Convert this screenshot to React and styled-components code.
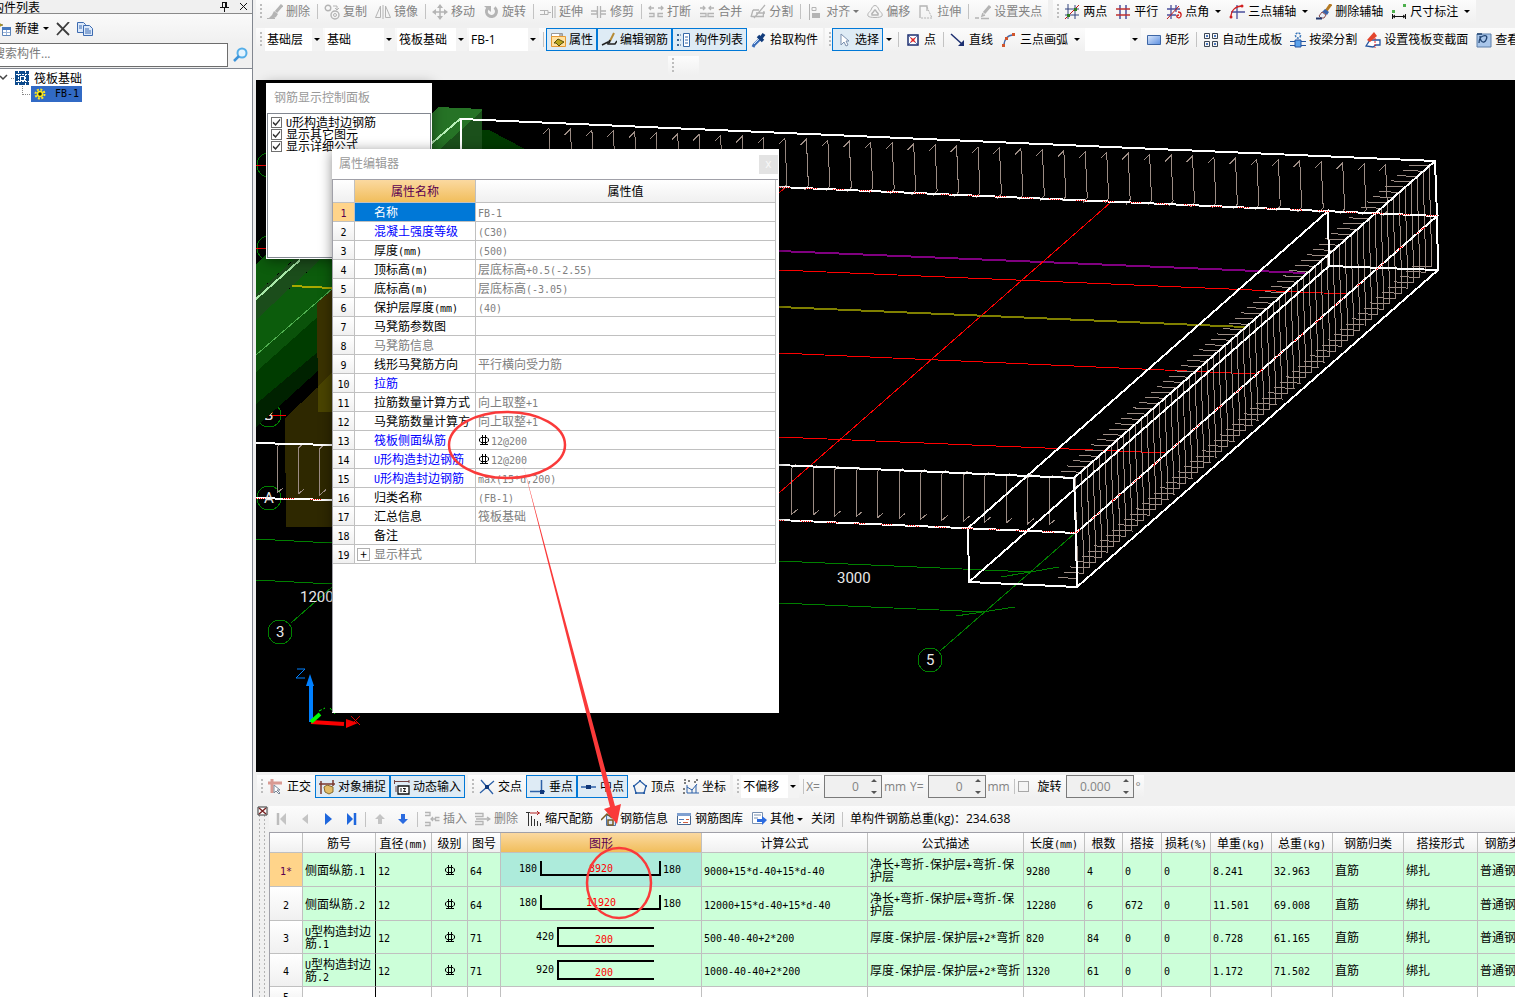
import React from 'react';
import styled, { createGlobalStyle, css } from 'styled-components';

const UI_FONT = '"Open Sans", "Noto Sans CJK SC", sans-serif';
const SONG_FONT = '"Noto Sans CJK SC", sans-serif';

const GlobalStyle = createGlobalStyle`
  * { box-sizing: border-box; }
  body {
    margin: 0;
    overflow: hidden;
    background: #f0f0f0;
    color: #000;
    font: 12px/16px ${UI_FONT};
  }
  button, input, select { font: inherit; color: inherit; }
`;

/* ---------- icons ---------- */

const G = '#b4b4b4';

const icons = {
  brush: <><path d="M15 1L9 8" stroke={G} strokeWidth="3" /><path d="M7 7l4 3-2 3-4 2H1l4-4z" fill={G} /><path d="M0 14.5h8" stroke={G} /></>,
  copy: <><circle cx="4" cy="4" r="2.8" stroke={G} strokeWidth="1.4" /><circle cx="11" cy="11" r="4" stroke={G} strokeWidth="1.4" /><circle cx="11" cy="11" r="1.5" stroke={G} /><path d="M9 2h4v4M11 4l2 2 2-2" stroke={G} /></>,
  mirror: <path d="M5.500 2L.500 13.500h5zM10.500 2l5 11.500h-5zM8 1v14" stroke={G} />,
  move: <><path d="M8 2v12M2 8h12" stroke={G} strokeWidth="1.500" /><path d="M8 0l3 4H5zM8 16l3-4H5zM0 8l4-3v6zM16 8l-4-3v6z" fill={G} /></>,
  rotate: <><path d="M4.500 4.500a5 5 0 1 0 7-1" stroke={G} strokeWidth="3" /><path d="M1 2h7v6z" fill={G} /></>,
  extend: <path d="M0 6.500h8v4H0M4.500 6v4M8 8.500h3M12.500 2v12M15 2v12" stroke={G} />,
  trim: <path d="M0 7h6v3H0M9 7h6M9 10h6M6.500 2v12M9.500 2v12" stroke={G} strokeWidth="1.300" />,
  breaks: <path d="M1 4h5M10 4h5M3 2L1 4l2 2M13 2l2 2-2 2M1 12.500h5v-3H1M15 12.500h-5v-3h5" stroke={G} strokeWidth="1.300" />,
  join: <path d="M1 4h5M10 4h5M4 2l2 2-2 2M12 2l-2 2 2 2M1 9.500h6v3H1M15 9.500H9v3h6" stroke={G} strokeWidth="1.300" />,
  split: <path d="M3 6h6M1 12.500h13M3 6L1 13M14 7l-1 6M15 1L4 14M6 9h9" stroke={G} strokeWidth="1.300" />,
  align: <><path d="M2.500 0v16M5 3.500h4v3H5z" stroke={G} /><path d="M5 9h8v5H5z" fill={G} /></>,
  offset: <><path d="M1 12c-1-3 2-4 3-6 2-6 6-6 8 0 1 2 4 3 3 6-1 2-13 2-14 0z" stroke={G} /><path d="M5 11c-1-2 1-2 2-4q1-2 2 0c1 2 3 2 2 4z" stroke={G} strokeWidth="1.500" /></>,
  stretch: <><path d="M2 14V2h7v5" stroke={G} strokeWidth="1.300" /><path d="M9 3l5 11H3" stroke={G} strokeDasharray="2 1" /></>,
  gripset: <><path d="M15 2L9 9" stroke={G} strokeWidth="3" /><path d="M8 9l-1 3 3-1M0 14h4M6 14.500h8" stroke={G} strokeWidth="1.500" /></>,
  twoPoint: <><path d="M4 0v15M11 1v14M1 5h14M1 11h14" stroke="#33447e" /><path d="M1 15L15 1" stroke="#c01818" /><path d="M3 10h3v3H3zM10 4h3v3h-3z" fill="#2f7d20" /></>,
  parallel: <><path d="M5 1v14M11 1v14" stroke="#4a4f9c" strokeWidth="1.500" /><path d="M1 5h14M1 11h14" stroke="#c03030" strokeWidth="1.500" /></>,
  pointAngle: <><path d="M5 1v14M1 5h13M1 11h9M10 1v7" stroke="#4a4f9c" strokeWidth="1.300" /><path d="M1 15L13 2" stroke="#c01818" /><path d="M12 8c4 0 4 5 1 6-3-1-3-3 0-3" stroke="#d02020" strokeWidth="1.300" /></>,
  threeAxis: <><path d="M8 1v14M2 8h14" stroke="#4a4f9c" strokeWidth="1.300" /><path d="M2 13C2 6 7 2 13 2" stroke="#d02020" strokeWidth="1.300" /><circle cx="2" cy="13" r="1.500" fill="#d02020" /><circle cx="13" cy="2" r="1.500" fill="#d02020" /></>,
  delAxis: <><path d="M15 0l-5 7" stroke="#b57b26" strokeWidth="3" /><path d="M9 5l4 3-2 3-5-3z" fill="#3a62a8" /><path d="M6 8l4 3-2 3H5l-2-2z" fill="#e8eef8" stroke="#8a4c4c" /><path d="M0 14.500h6" stroke="#22376a" strokeWidth="2" /></>,
  dimension: <><path d="M1.500 10v5M14.500 10v5M1 12.500h14M4 11l-2 1.500L4 14M12 11l2 1.500-2 1.500" stroke="#111" /><path d="M1 6h3v3H1zM12 0h3v3h-3z" fill="#4db04d" /></>,
  props: <><path d="M1.500 1.500h11v4h-11z" fill="#fff" stroke="#9a9a9a" /><path d="M9 3h3" stroke="#666" /><path d="M1.500 4.500h14v10h-14z" fill="#ffe1a0" stroke="#e59a35" /><path d="M4 11l4-4 6 3-3 2-2 2-3-3z" fill="#b9a51c" stroke="#57510a" /></>,
  editBar: <><path d="M13 1L9 9" stroke="#b58a35" strokeWidth="2" /><path d="M9 8l-1 3" stroke="#222" strokeWidth="2" /><path d="M1 13l6-3v2h7l2-3" stroke="#222" strokeWidth="1.500" /></>,
  list: <><path d="M1 2h2v2H1zM1 7h2v2H1zM1 12h2v2H1z" fill="#3e6591" /><path d="M4 3h2M4 8h2M4 13h2" stroke="#3e6591" strokeDasharray="1 1" /><path d="M7.500 1.500h6v13h-6z" fill="#fff" stroke="#3569a8" /><path d="M9 5h3M9 8h3M9 11h3" stroke="#3569a8" /></>,
  dropper: <><path d="M9 7l-6 6-1 2" stroke="#3b6db8" strokeWidth="3" /><path d="M8 7l-5 5" stroke="#cfe6ff" /><path d="M7 4l5 5M10 6l3-4" stroke="#123c7c" strokeWidth="3.500" /></>,
  cursor: <path d="M5 2v11l3-3 2 4 2-1-2-4h3z" fill="#fff" stroke="#7b8fae" />,
  point: <><path d="M3 3h10v10H3z" fill="#fff" stroke="#1c2f70" strokeWidth="1.500" /><path d="M4 4l8 8M12 4l-8 8" stroke="#6b7cb8" /><path d="M6 6l4 4M10 6l-4 4" stroke="#e02828" strokeWidth="1.500" /></>,
  line: <><path d="M1 2l11 10" stroke="#1c2f70" strokeWidth="1.500" /><path d="M14 8v6H8z" fill="#1c2f70" /></>,
  arc: <><path d="M3 14C3 7 7 3 12 3" stroke="#4a6ba8" strokeWidth="1.500" /><path d="M1 12h3v3H1zM4 5h3v3H4zM11 1h3v3h-3z" fill="#d2552c" /></>,
  rect: <path d="M1.500 3.500h13v9h-13z" fill="url(#rectFill)" stroke="#3d66a5" />,
  autoSlab: <><path d="M1.500 1.500h5v5h-5zM9.500 1.500h5v5h-5zM1.500 9.500h5v5h-5zM9.500 9.500h5v5h-5z" stroke="#3b4654" /><path d="M3 3h2v2H3zM11 3h2v2h-2zM3 11h2v2H3zM11 11h2v2h-2z" fill="#4a78c0" /></>,
  beam: <><circle cx="8" cy="3.500" r="2.500" stroke="#3975b8" strokeWidth="1.500" strokeDasharray="2 1" /><path d="M0 9.500h16M0 13.500h16" stroke="#2455a0" /><path d="M5 8h6v7H5z" fill="#5ba2ec" stroke="#2455a0" /></>,
  raft: <><path d="M1 14l4-6h10v5h-4l-3 2z" fill="#fff" stroke="#2455a0" strokeWidth="1.300" /><path d="M2 8l7-8 3 4-7 6z" fill="#e3452d" /><path d="M10 6v10" stroke="#e02020" strokeDasharray="2 1" /></>,
  view: <><path d="M1 2h14v13H1z" fill="#a9c6ea" stroke="#5d7ea9" /><path d="M1 2h5M4 4c0 6 4 8 6 4s0-5-3-4-4 3-4 7" stroke="#1f416e" strokeWidth="1.300" /></>,
  ortho: <><path d="M0 4h14M4 0v14" stroke="#d99a92" strokeWidth="3" /><path d="M6 6v8l2-2 3 3 1-1-3-3h3z" fill="#fff" stroke="#7a8899" /></>,
  snap: <><path d="M2 2v13M0 5h16M14 1v6" stroke="#7b3a30" strokeWidth="1.500" /><path d="M5 8l3-2 6 2v5l-4 2-4-2z" fill="#e2bd68" stroke="#876a2c" /></>,
  dynInput: <><path d="M.500 5V1M1 2.500h14M15 1v3M2 7v6" stroke="#714141" /><path d="M4 7h11v8H4z" fill="#fff" stroke="#111" strokeWidth="1.300" /><path d="M7 9v4M9 9.500h2.500L9.500 12.500H12" stroke="#111" /></>,
  cross: <><path d="M2 1l12 14M15 2L1 14" stroke="#2d61a8" strokeWidth="1.300" /><path d="M6 6h4v4H6z" fill="#10387a" /></>,
  perp: <><path d="M0 12.500h15M11.500 1v12" stroke="#2d61a8" strokeWidth="1.500" /><path d="M10 11h4v4h-4z" fill="#10387a" /></>,
  mid: <><path d="M0 8h15" stroke="#2d61a8" strokeWidth="1.500" /><path d="M5 6h5v4H5z" fill="#10387a" /></>,
  vertex: <><path d="M8 2l6 5-2 7H4L2 7z" stroke="#2d61a8" strokeWidth="1.300" /><path d="M7 1h2v2H7zM13 6h2v2h-2zM1 6h2v2H1zM3 13h2v2H3zM11 13h2v2h-2z" fill="#2d61a8" /></>,
  coord: <><path d="M4 6v8h12M4 8l5 3 5-6M9 10v4M13 6v8" stroke="#2d61a8" /><path d="M1 1h2M5 2h2M1 4h2M13 1h2M11 3h2M1 9v2M1 13v2" stroke="#555" strokeWidth="1.500" /></>,
  first: <><path d="M4 2v12" stroke="#bcbcbc" strokeWidth="2.500" /><path d="M12 2v12L6 8z" fill="#c4c4c4" /></>,
  prev: <path d="M11 3v10L5 8z" fill="#c4c4c4" />,
  next: <path d="M5 2l7 6-7 6z" fill="#1f67dd" />,
  last: <><path d="M4 2l6 6-6 6z" fill="#1f67dd" /><path d="M12 2v12" stroke="#1f67dd" strokeWidth="2.500" /></>,
  up: <path d="M8 3l5 5h-3v5H6V8H3z" fill="#c4c4c4" />,
  down: <path d="M8 13l5-5h-3V3H6v5H3z" fill="#2b6be0" />,
  insert: <path d="M1 1.500h5v3H1M1 11.500h5v3H1M7 8h4M9 6L7 8l2 2M15.500 6.500h-4v3h4" stroke={G} strokeWidth="1.300" />,
  remove: <path d="M0 2.500h8v3H0M0 10.500h8v3H0M1 8h14M12 6l3 2-3 2" stroke={G} strokeWidth="1.300" />,
  scale: <><path d="M2.500 1v14M5.500 5v10M8.500 8v7M11.500 10v5M14.500 12v3M0 1.500h4" stroke="#333" /><path d="M4 2h10M11 0l2 2-2 2" stroke="#b02020" /></>,
  info: <><path d="M5.500 4.500h9v10h-9z" fill="#d7e4f5" stroke="#4d74ad" /><path d="M0 9l6-6 5 4M7 9h5v5H7z" stroke="#7a5a20" strokeWidth="1.500" /></>,
  library: <><path d="M1.500 2.500h13v11h-13z" fill="#fff" stroke="#44658f" /><path d="M1 2h14v3H1z" fill="#7fa0d0" /><path d="M3 8.500h5M3 11.500h2" stroke="#4f7ab8" /><path d="M10 8.500h3M7 11.500h5" stroke="#d06040" /></>,
  other: <><path d="M1.500 1.500h10v11h-10z" fill="#fff" stroke="#7890b0" /><path d="M3 4h7M3 7h4" stroke="#7890b0" /><path d="M6 8h5V5l5 4-5 5v-3H6z" fill="#2b6be0" /></>,
};

const IconSvg = styled.svg`
  flex: none;
  display: block;
  fill: none;
`;

const Icon = ({ name }) => (
  <IconSvg width="16" height="16" viewBox="0 0 16 16" aria-hidden="true">
    {name === 'rect' && (
      <defs>
        <linearGradient id="rectFill" x2="1" y2="1">
          <stop stopColor="#dbe8fb" />
          <stop offset="1" stopColor="#5c8fe0" />
        </linearGradient>
      </defs>
    )}
    {icons[name]}
  </IconSvg>
);

const Caret = ({ color = '#000' }) => (
  <IconSvg width="6" height="3" viewBox="0 0 6 3" aria-hidden="true">
    <path d="M0 0h6L3 3z" fill={color} />
  </IconSvg>
);

const RebarSign = () => (
  <IconSvg width="10" height="10" viewBox="0 0 10 10" aria-hidden="true">
    <path d="M3.500 0v9M6.500 0v9M1 9.500h8M2 2.500h6L9.500 4v2L8 7.500H2L.500 6V4z" stroke="#000" />
  </IconSvg>
);

/* Latin runs are set in a half-width mono face so two letters span one ideograph */
const Half = styled.span`
  font: 10px/0 "DejaVu Sans Mono", monospace;
`;

const Song = ({ children }) =>
  String(children).split(/([\x20-\x7e]+)/).map((part, i) => (i % 2 ? <Half key={i}>{part}</Half> : part));

/* ---------- toolbar parts ---------- */

const Row = styled.div`
  display: flex;
  height: ${p => p.$height || 23}px;
  white-space: nowrap;
`;

const Band = styled.div`
  display: flex;
  flex: none;
  align-items: center;
  margin-left: ${p => p.$gap || 0}px;
  padding-right: ${p => p.$end || 0}px;
  background: linear-gradient(#fcfcfc, #f0f0f0);
`;

const Grip = styled.span`
  flex: none;
  width: 2px;
  height: 15px;
  margin: 0 1px 0 4px;
  background: repeating-linear-gradient(#bdbdbd 0 2px, transparent 2px 4px);
`;

const Sep = styled.span`
  flex: none;
  width: 1px;
  height: 15px;
  margin: 0 2px 0 3px;
  background: #c3c3c3;
`;

const ToolButton = styled.button`
  display: flex;
  flex: none;
  align-items: center;
  gap: 3px;
  height: 23px;
  padding: 0 3px;
  border: 1px solid ${p => (p.$on ? '#0078d7' : 'transparent')};
  background: ${p => (p.$on ? '#deebf5' : 'transparent')};
  white-space: nowrap;
  color: ${p => (p.disabled ? '#838383' : '#000')};

  ${p => p.$iconOnly && css`
    justify-content: center;
    width: 23px;
  `}
`;

const CaretSlot = styled.span`
  display: flex;
  justify-content: flex-end;
  width: ${p => (p.$tight ? 6 : 9)}px;
`;

const Tool = ({ icon, label, caret, tight, on, disabled }) => (
  <ToolButton $on={on} disabled={disabled}>
    {icon && <Icon name={icon} />}
    {label}
    {caret && <CaretSlot $tight={tight}><Caret color={disabled ? '#777' : '#000'} /></CaretSlot>}
  </ToolButton>
);

const SplitCaret = styled.button`
  display: flex;
  align-items: center;
  width: 12px;
  height: 23px;
  padding: 0 3px;
  border: 0;
  background: none;
`;

const ComboGroup = styled.div`
  display: flex;
  gap: 2px;
  padding: 0 1px 0 ${p => p.$lead}px;
`;

const ComboBox = styled.label`
  display: grid;
  width: ${p => p.$width}px;
  height: 23px;
  align-items: center;
  background: linear-gradient(to right, #fff calc(100% - 11px), #f3f3f3 0);

  > * { grid-area: 1 / 1; }
  > svg { justify-self: end; margin-right: 3px; pointer-events: none; }

  select {
    width: 100%;
    height: 21px;
    padding: 0 2px;
    border: 0;
    appearance: none;
    background: transparent;
  }
`;

const Combo = ({ name, value, width }) => (
  <ComboBox $width={width}>
    <select aria-label={name} defaultValue={value}><option>{value}</option></select>
    <Caret />
  </ComboBox>
);

/* ---------- component list ---------- */

const Sidebar = styled.aside`
  flex: 0 0 253px;
  display: flex;
  flex-direction: column;
  border-right: 1px solid #828790;
  margin-right: 3px;
  overflow: hidden;
  background: #f0f0f0;
`;

const SideTitle = styled.div`
  display: flex;
  align-items: center;
  justify-content: space-between;
  height: 14px;
  padding-right: 4px;
  border-bottom: 1px solid #8a8a8a;
  font-family: ${SONG_FONT};
  line-height: 13px;
`;

const Shifted = styled.div`
  display: flex;
  align-items: center;
  gap: ${p => p.$gap || 0}px;
  margin-left: -${p => p.$by}px;
`;

const PlainButton = styled.button`
  display: flex;
  align-items: center;
  gap: 4px;
  padding: 0;
  border: 0;
  background: none;
`;

const SideTools = styled.div`
  display: flex;
  height: 29px;
  background: linear-gradient(#fafafa, #f0f0f0);
`;

const SearchRow = styled.div`
  display: flex;
  height: 26px;
  border-bottom: 1px solid #828790;
`;

const SearchInput = styled.input`
  flex: 1;
  min-width: 0;
  height: 24px;
  margin-left: -8px;
  padding: 0 0 3px;
  border: 1px solid #6d6d6d;
  outline: none;
  background: #fff;

  &::placeholder { color: #7a7a7a; opacity: 1; }
`;

const SearchButton = styled.button`
  width: 24px;
  height: 24px;
  padding: 4px;
  border: 0;
  background: none;
`;

const Tree = styled.div`
  flex: 1;
  padding-top: 1px;
  background: #fff;
  font-family: ${SONG_FONT};
`;

const TreeNode = styled.div`
  display: flex;
  align-items: center;
  height: 16px;
  gap: 5px;
`;

const LeafRow = styled.div`
  display: flex;
`;

const TreeLeaf = styled.div`
  display: flex;
  align-items: center;
  gap: 9px;
  width: 51px;
  height: 16px;
  padding-left: 3px;
  background: #316ac5;
`;

const ComponentList = () => (
  <Sidebar>
    <SideTitle>
      <Shifted $by={8}>构件列表</Shifted>
      <Shifted $by={0} $gap={10}>
        <PlainButton aria-label="固定">
          <IconSvg width="9" height="11" viewBox="0 0 9 11"><path d="M2.500 1v5M2 1.500h4M5.500 1v5M6.500 1v5M0 6.500h9M4.500 7v4" stroke="#111" /></IconSvg>
        </PlainButton>
        <PlainButton aria-label="关闭">
          <IconSvg width="9" height="9" viewBox="0 0 9 9"><path d="M1 1l7 7M8 1L1 8" stroke="#111" /></IconSvg>
        </PlainButton>
      </Shifted>
    </SideTitle>
    <SideTools>
      <Shifted $by={5} $gap={7}>
        <PlainButton>
          <IconSvg width="16" height="16" viewBox="0 0 16 16">
            <path d="M7.500 6.500h8v8h-8z" fill="#fff" stroke="#5d84b8" /><path d="M7 6h9v3H7z" fill="#4679c0" /><path d="M8 11.500h7M11.500 9v5" stroke="#9ab4d8" />
            <path d="M4 0l1 3 3 1-3 1-1 3-2-3-2-1 3-1z" fill="#d6b400" stroke="#4a4000" strokeWidth=".500" />
          </IconSvg>
          新建<Caret />
        </PlainButton>
        <PlainButton aria-label="删除">
          <IconSvg width="14" height="14" viewBox="0 0 14 14"><path d="M1 1l12 12M13 0L1 13" stroke="#3c3c3c" strokeWidth="1.800" /></IconSvg>
        </PlainButton>
        <PlainButton aria-label="复制">
          <IconSvg width="16" height="14" viewBox="0 0 16 14">
            <path d="M.500 .500h6l2 2v8h-8z" fill="#dbe9fb" stroke="#3d6bb0" /><path d="M6.500 3.500h6l3 3v7h-9z" fill="#dbe9fb" stroke="#3d6bb0" /><path d="M2 4h3M2 6h3M8 7h4M8 9h6M8 11h6" stroke="#3d6bb0" />
          </IconSvg>
        </PlainButton>
      </Shifted>
    </SideTools>
    <SearchRow>
      <SearchInput aria-label="搜索构件" placeholder="搜索构件..." />
      <SearchButton aria-label="搜索">
        <IconSvg width="16" height="16" viewBox="0 0 16 16"><circle cx="10" cy="6" r="4.500" stroke="#55aee8" strokeWidth="2" fill="#e4f4ff" /><path d="M7 9l-5 5" stroke="#3d93d8" strokeWidth="2.500" /></IconSvg>
      </SearchButton>
    </SearchRow>
    <Tree>
      <TreeNode>
        <IconSvg width="29" height="16" viewBox="0 0 29 16">
          <path d="M0 6l3 3 4-4" stroke="#444" strokeWidth="1.500" />
          <path d="M11 8.500h4" stroke="#888" strokeDasharray="1 1" />
          <g shapeRendering="crispEdges">
            <path d="M15 1h14v14H15z" fill="#0c4a8c" />
            <path d="M15.500 4.500h13M15.500 11.500h13M18.500 1v14M25.500 1v14" stroke="#fff" strokeDasharray="2 1" />
            <path d="M20 6h4v4h-4z" fill="#0c4a8c" stroke="#fff" />
          </g>
        </IconSvg>
        筏板基础
      </TreeNode>
      <LeafRow>
        <IconSvg width="31" height="16" viewBox="0 0 31 16">
          <path d="M22.500 0v9M23 8.500h8" stroke="#888" strokeDasharray="1 1" />
        </IconSvg>
        <TreeLeaf>
          <IconSvg width="12" height="12" viewBox="0 0 12 12">
            <circle cx="6" cy="6" r="4.500" stroke="#ffe81c" strokeWidth="2" strokeDasharray="2 1.500" />
            <circle cx="6" cy="6" r="2.500" stroke="#ffe81c" strokeWidth="1.500" fill="#1a2a00" />
          </IconSvg>
          <Song>FB-1</Song>
        </TreeLeaf>
      </LeafRow>
    </Tree>
  </Sidebar>
);

/* ---------- 3D view ---------- */

const SceneSvg = styled.svg`
  display: block;
  width: 100%;
  height: 100%;
  background: #000;
  fill: none;
`;

const range = n => Array.from({ length: n }, (_, i) => i);

const backStirrups = range(40).map(i => {
  const x = 549 + i * 21.450;
  const y = 128 + i * 0.940;
  return `M${x - 6} ${y + 6}L${x} ${y}L${x + 2} ${y + 46}L${x - 2} ${y + 51}`;
}).join('');

const frontStirrups = range(37).map(i => {
  const x = 277 + i * 21.450;
  const y = 447 + i * 0.880;
  return `M${x + 4} ${y - 4}L${x} ${y}L${x} ${y + 46}L${x + 6} ${y + 41}`;
}).join('');

const sideStirrups = range(60).map(i => {
  const x = 1429 - i * 6;
  const y = 166 + i * 5.280;
  return `M${x - 20} ${y - 1}L${x} ${y}L${x + 3} ${y + 101}L${x - 17} ${y + 100}`;
}).join('');

const redEdges = 'M779 187L1437 216L1076 533L779 520M256 498L332 500';

const Scene = () => (
  <SceneSvg role="img" aria-label="三维视图">
    <g transform="translate(-256 -80)">
      <g shapeRendering="crispEdges">
        <circle cx="269" cy="165" r="12" stroke="#008000" />
        <circle cx="269" cy="248" r="12" stroke="#008000" />
        <circle cx="269" cy="415" r="12" stroke="#008000" />
        <path d="M256 165h10M256 248h10M256 415h30" stroke="#f00" />
      </g>
      <text x="264" y="420" fill="#e8e8e8" fontFamily="Roboto, sans-serif" fontSize="15">B</text>
      <g shapeRendering="crispEdges">
        <path d="M432 113l6-6 44 2v40h-50z" fill="#267326" />
        <path d="M482 111v38h-42z" fill="#1b501b" />
        <path d="M482 130h7l36 19h-43z" fill="#003a00" />
        <path d="M256 264l12-12h34l-46 42z" fill="#0c5c0c" />
        <path d="M256 294l42-38h26l-68 64z" fill="#1b4d1b" />
        <path d="M256 320l66-62h10v30l-76 66z" fill="#0c5c0c" />
        <path d="M256 354l76-66v16l-76 68z" fill="#0a520a" />
        <path d="M256 372l76-68v36l-76 64z" fill="#003c00" />
        <path d="M256 404l76-64v18l-46 42-30 27z" fill="#002200" />
        <path d="M317 303l15-13v122h-14z" fill="#3a3200" />
        <path d="M285 418l47-44v153h-46z" fill="#2e2800" />
        <path d="M318 386l14-14v40h-14z" fill="#4a4400" />
        <path d="M256 299l44-39" stroke="#a8e8a8" strokeWidth="2" />
        <path d="M256 355l76-66" stroke="#4fae4f" />
        <path d="M292 286l40 2" stroke="#a8a800" strokeWidth="2" />

        <path d="M779 251l526 22" stroke="#800080" strokeWidth="2" />
        <path d="M779 307l466 20" stroke="#808000" strokeWidth="2" />
        <path d="M779 270l568 24M779 353l476 21M779 437l386 16" stroke="#f00" />
        <path d="M1110 203L779 493M786 187l-7 6" stroke="#f00" />
        <path d="M779 561l252 11M1001 577l58-10M779 603l206 9M956 616l59-9M1074 534L940 651M256 539l76 4M256 580l76 4M332 587l-41 36" stroke="#008000" />
        <circle cx="269" cy="498" r="12" stroke="#008000" />
        <circle cx="280" cy="632" r="12" stroke="#008000" />
        <circle cx="930" cy="660" r="12" stroke="#008000" />

        <path d={backStirrups + frontStirrups + sideStirrups} stroke="#9c8c84" />

        <path d="M432 143l28-24" stroke="#b8f0b8" strokeWidth="2" />
        <path
          d="M461 149V119L1435 161L1437 216L1438 270L1329 266L1328 211L968 528L969 582L1077 587L1076 533L1074 478L1435 161M779 187L1437 216L1076 533L779 520M1329 266L969 582M1438 270L1077 587M779 465L1074 478M256 443l76 2M256 498l76 2"
          stroke="#fff"
          strokeWidth="2"
        />
        <path d={redEdges} stroke="#f00" strokeDasharray="1 1 1 1 1 1 1 1 1 1 1 16" />
      </g>

      <g fill="#e8e8e8" fontFamily="Roboto, sans-serif" fontSize="15">
        <text x="837" y="583">3000</text>
        <text x="300" y="602">1200</text>
        <text x="276" y="637">3</text>
        <text x="926" y="665">5</text>
        <text x="264" y="503">A</text>
      </g>

      <path d="M311 722V684" stroke="#0080ff" strokeWidth="4" />
      <path d="M310 674l4 12h-8z" fill="#0080ff" />
      <path d="M297 669h8l-9 9h9" stroke="#0080ff" />
      <path d="M311 722l33 2" stroke="#f00" strokeWidth="4" />
      <path d="M358 723l-12 5v-9z" fill="#f00" />
      <path d="M351 716l9 9M360 716l-9 9" stroke="#f00" />
      <path d="M311 722l9-8" stroke="#0f0" strokeWidth="4" />
      <path d="M319 711l6-3M330 708l5 6" stroke="#0f0" strokeDasharray="3 2" />
    </g>
  </SceneSvg>
);

const Viewport = styled.div`
  position: relative;
  flex: 1;
  min-height: 0;
`;

const FloatWindow = styled.section`
  position: absolute;
  left: ${p => p.$left}px;
  top: ${p => p.$top}px;
  width: ${p => p.$width}px;
  height: ${p => p.$height}px;
  display: flex;
  flex-direction: column;
  padding: 0 1px 1px;
  background: #fff;
  box-shadow: 0 2px 12px rgba(0, 0, 0, 0.450);
`;

const WindowTitle = styled.header`
  flex: none;
  display: flex;
  align-items: center;
  justify-content: space-between;
  height: 30px;
  padding: ${p => p.$pad};
  color: #999;
`;

const CloseButton = styled.button`
  width: 19px;
  height: 19px;
  padding: 0;
  border: 0;
  background: #e3e3e3;
  color: #f8f8f8;
  line-height: 16px;
`;

const CheckList = styled.div`
  flex: 1;
  padding: 2px 3px;
  border: 1px solid #828790;
  font-family: ${SONG_FONT};
`;

const CheckLabel = styled.label`
  display: flex;
  align-items: center;
  gap: 4px;
  height: 12px;
  line-height: 12px;
  white-space: nowrap;
`;

const CheckBox = styled.input.attrs({ type: 'checkbox' })`
  flex: none;
  appearance: none;
  width: 11px;
  height: 11px;
  margin: 0;
  border: 1px solid ${p => (p.$pale ? '#a8a8a8' : '#707070')};
  background: ${p => (p.$pale ? '#f4f4f4' : '#fff')};

  &:checked::before {
    content: "";
    display: block;
    width: 9px;
    height: 9px;
    background: #333;
    clip-path: polygon(10% 45%, 40% 70%, 90% 10%, 90% 32%, 40% 95%, 10% 67%);
  }
`;

const PropTable = styled.table`
  width: calc(100% - 2px);
  border-collapse: separate;
  border-spacing: 0;
  table-layout: fixed;
  font: 12px/16px ${SONG_FONT};

  th, td {
    height: 19px;
    padding: 0 2px;
    border: solid #c0c0c0;
    border-width: 0 1px 1px 0;
    font-weight: normal;
    text-align: left;
    white-space: nowrap;
    overflow: hidden;
  }

  thead th {
    height: 23px;
    text-align: center;
    background: linear-gradient(#fff, #f0f0f0);
  }
`;

const RowNo = styled.th`
  && {
    text-align: center;
    padding: 0;
    color: ${p => (p.$on ? '#5a0050' : '#000')};
    background: ${p => (p.$on ? '#ffd48a' : 'linear-gradient(#fff, #f0f0f0)')};
  }
`;

const ActiveHead = styled.th`
  &&& {
    color: #5a0050;
    background: linear-gradient(#fbd9a0, #f1be5c);
  }
`;

const nameColors = { key: '#00f', dim: '#808080', on: '#fff' };

const NameCell = styled.td`
  && {
    padding-left: ${p => (p.$expand ? 2 : 19)}px;
    padding-right: 0;
    color: ${p => nameColors[p.$kind] || '#000'};
    background: ${p => (p.$kind === 'on' ? '#0078d7' : '#fff')};
  }
`;

const ValueCell = styled.td`
  color: #808080;
`;

const Inline = styled.span`
  display: flex;
  align-items: center;
  gap: ${p => p.$gap}px;
  padding-left: ${p => p.$lead || 0}px;
`;

const Expander = styled.button`
  width: 13px;
  height: 13px;
  padding: 0;
  border: 1px solid #b0b0b0;
  background: #fff;
  color: #000;
  line-height: 10px;
`;

const properties = [
  ['名称', 'FB-1', 'on'],
  ['混凝土强度等级', '(C30)', 'key'],
  ['厚度(mm)', '(500)'],
  ['顶标高(m)', '层底标高+0.5(-2.55)'],
  ['底标高(m)', '层底标高(-3.05)'],
  ['保护层厚度(mm)', '(40)'],
  ['马凳筋参数图', ''],
  ['马凳筋信息', '', 'dim'],
  ['线形马凳筋方向', '平行横向受力筋'],
  ['拉筋', '', 'key'],
  ['拉筋数量计算方式', '向上取整+1'],
  ['马凳筋数量计算方', '向上取整+1'],
  ['筏板侧面纵筋', '12@200', 'key', true],
  ['U形构造封边钢筋', '12@200', 'key', true],
  ['U形构造封边钢筋', 'max(15*d,200)', 'key'],
  ['归类名称', '(FB-1)'],
  ['汇总信息', '筏板基础'],
  ['备注', ''],
  ['显示样式', '', 'dim'],
];

const PropertyEditor = () => (
  <PropTable>
    <colgroup>
      <col width="22" />
      <col width="121" />
      <col />
    </colgroup>
    <thead>
      <tr>
        <RowNo />
        <ActiveHead>属性名称</ActiveHead>
        <th>属性值</th>
      </tr>
    </thead>
    <tbody>
      {properties.map(([name, value, kind, rebar], i) => {
        const last = i === properties.length - 1;
        return (
          <tr key={i}>
            <RowNo $on={i === 0}><Song>{i + 1}</Song></RowNo>
            <NameCell $kind={kind} $expand={last}>
              {last
                ? <Inline $gap={4}><Expander aria-label="展开">+</Expander>{name}</Inline>
                : <Song>{name}</Song>}
            </NameCell>
            <ValueCell>
              {rebar
                ? <Inline $gap={2} $lead={1}><RebarSign /><span><Song>{value}</Song></span></Inline>
                : <Song>{value}</Song>}
            </ValueCell>
          </tr>
        );
      })}
    </tbody>
  </PropTable>
);

const PropFrame = styled.div`
  border-top: 1px solid #a0a0a8;
  border-left: 1px solid #a0a0a8;
  margin-left: -1px;
  flex: 1;
`;

/* ---------- bottom dock ---------- */

const Dock = styled.div`
  flex: 0 0 225px;
  display: flex;
  flex-direction: column;
  padding: 3px 0 0 1px;
  overflow: hidden;
`;

const UnitLabel = styled.label`
  display: flex;
  align-items: center;
  color: #838383;
  gap: 4px;
`;

const Unit = styled.span`
  width: ${p => p.$width}px;
  padding-left: 2px;
  color: #838383;
`;

const SpinBox = styled.span`
  display: flex;
  align-items: center;
  width: ${p => p.$width}px;
  height: 23px;
  padding: 0 4px 0 2px;
  border: 1px solid #7a7a7a;
  background: #f0f0f0;

  input {
    flex: 1;
    min-width: 0;
    padding: 0 12px 0 0;
    border: 0;
    background: none;
    text-align: right;
    color: #838383;
  }
`;

const Spin = ({ value, width, label }) => (
  <SpinBox $width={width}>
    <input type="text" defaultValue={value} aria-label={label} />
    <IconSvg width="6" height="15" viewBox="0 0 6 15"><path d="M0 3l3-3 3 3zM0 12l3 3 3-3z" fill="#555" /></IconSvg>
  </SpinBox>
);

const RotateLabel = styled.label`
  display: flex;
  align-items: center;
  gap: 9px;
  padding: 0 4px 0 1px;
`;

const DockBody = styled.div`
  display: flex;
  flex: 1;
  min-height: 0;
  padding-top: 8px;
`;

const DockHandle = styled.div`
  flex: 0 0 12px;
  background: radial-gradient(circle, #b4b4b4 1px, transparent 1px) 0 12px / 5px 4px;
`;

const DockMain = styled.div`
  flex: 1;
  min-width: 0;
`;

const DetailTools = styled.div`
  display: flex;
  align-items: center;
  height: 27px;
  padding: 1px 0 1px 1px;
  border-bottom: 1px solid #a0a0a8;
  background: linear-gradient(#fcfcfc, #f0f0f0);
  white-space: nowrap;
`;

const Total = styled.span`
  padding-left: 5px;
`;

const BarTable = styled.table`
  width: 1271px;
  table-layout: fixed;
  border-collapse: separate;
  border-spacing: 0;
  border-left: 1px solid #a0a0a8;
  background: #fff;
  font: 12px/12px ${SONG_FONT};

  th, td {
    padding: 0 1px 0 2px;
    border: solid #c0c0c0;
    border-width: 0 1px 1px 0;
    text-align: left;
    word-break: break-all;
    overflow: hidden;
    font-weight: normal;
  }

  thead th {
    height: 20px;
    padding: 0;
    text-align: center;
    white-space: nowrap;
    background: linear-gradient(#fff, #f0f0f0);
  }

  tbody td:nth-child(2) { border-right-color: #000; }
`;

const BarRow = styled.tr`
  height: ${p => p.$height}px;
  background: ${p => (p.$blank ? '#fff' : '#ccffd9')};
`;

const ShapeCell = styled.td`
  && { padding: 0; background: ${p => (p.$on ? '#adebdb' : 'transparent')}; }
  svg { fill: #000; font: 10px "DejaVu Sans Mono", monospace; }
`;

const CenterCell = styled.td`
  && { text-align: center; }
  svg { margin: 0 auto; }
`;

const columns = [
  ['', 33], ['筋号', 73], ['直径(mm)', 56], ['级别', 36], ['图号', 33], ['图形', 201],
  ['计算公式', 166], ['公式描述', 156], ['长度(mm)', 61], ['根数', 38], ['搭接', 39],
  ['损耗(%)', 49], ['单重(kg)', 61], ['总重(kg)', 61], ['钢筋归类', 71], ['搭接形式', 74], ['钢筋类型', 62],
];

const bars = [
  { name: '侧面纵筋.1', no: '64', side: '180', len: '8920', tail: '180', formula: '9000+15*d-40+15*d-40', desc: '净长+弯折-保护层+弯折-保护层', rest: ['9280', '4', '0', '0', '8.241', '32.963'], height: 34 },
  { name: '侧面纵筋.2', no: '64', side: '180', len: '11920', tail: '180', formula: '12000+15*d-40+15*d-40', desc: '净长+弯折-保护层+弯折-保护层', rest: ['12280', '6', '672', '0', '11.501', '69.008'], height: 34 },
  { name: 'U型构造封边筋.1', no: '71', side: '420', len: '200', formula: '500-40-40+2*200', desc: '厚度-保护层-保护层+2*弯折', rest: ['820', '84', '0', '0', '0.728', '61.165'], height: 33 },
  { name: 'U型构造封边筋.2', no: '71', side: '920', len: '200', formula: '1000-40-40+2*200', desc: '厚度-保护层-保护层+2*弯折', rest: ['1320', '61', '0', '0', '1.172', '71.502'], height: 33 },
];

const BarShape = ({ side, len, tail }) => (
  <IconSvg width="200" height="32" viewBox="0 0 200 32">
    {tail ? (
      <>
        <path d="M40 7v14h119V7" fill="none" stroke="#000" strokeWidth="2" />
        <text x="18" y="18">{side}</text>
        <text x="162" y="19">{tail}</text>
        <text x="100" y="18" textAnchor="middle" fill="#f00">{len}</text>
      </>
    ) : (
      <>
        <path d="M153 7H57v18h96" fill="none" stroke="#000" strokeWidth="2" />
        <text x="35" y="19">{side}</text>
        <text x="103" y="22" textAnchor="middle" fill="#f00">{len}</text>
      </>
    )}
  </IconSvg>
);

const BarDetails = () => (
  <BarTable>
    <colgroup>{columns.map(([label, width]) => <col key={label} width={width} />)}</colgroup>
    <thead>
      <tr>
        {columns.map(([label]) => label === '图形'
          ? <ActiveHead key={label}>{label}</ActiveHead>
          : <th key={label}><Song>{label}</Song></th>)}
      </tr>
    </thead>
    <tbody>
      {bars.map((bar, i) => (
        <BarRow key={bar.name} $height={bar.height}>
          <RowNo $on={i === 0}><Song>{i === 0 ? '1*' : i + 1}</Song></RowNo>
          <td><Song>{bar.name}</Song></td>
          <td><Song>12</Song></td>
          <CenterCell><RebarSign /></CenterCell>
          <td><Song>{bar.no}</Song></td>
          <ShapeCell $on={i === 0}><BarShape {...bar} /></ShapeCell>
          <td><Song>{bar.formula}</Song></td>
          <td><Song>{bar.desc}</Song></td>
          {bar.rest.map((value, k) => <td key={k}><Song>{value}</Song></td>)}
          <td>直筋</td>
          <td>绑扎</td>
          <td>普通钢筋</td>
        </BarRow>
      ))}
      <BarRow $blank $height={19}>
        <RowNo><Song>5</Song></RowNo>
        {columns.slice(1).map(([label]) => <td key={label} />)}
      </BarRow>
    </tbody>
  </BarTable>
);

/* ---------- markup over the page ---------- */

const MarkupSvg = styled.svg`
  position: absolute;
  inset: 0;
  width: 100%;
  height: 100%;
  pointer-events: none;
  fill: none;
`;

const Markup = () => (
  <MarkupSvg aria-hidden="true">
    <g stroke="#fa3a3a" strokeWidth="2.500">
      <ellipse cx="507" cy="445" rx="58" ry="33" />
      <ellipse cx="619" cy="883" rx="32" ry="35" />
    </g>
    <path d="M523 464L615 806L621 804L617 824L604 809L610 807z" fill="#fa3a3a" />
  </MarkupSvg>
);

/* ---------- page ---------- */

const Page = styled.div`
  position: relative;
  display: flex;
  height: 100vh;
  overflow: hidden;
`;

const Main = styled.main`
  flex: 1;
  min-width: 0;
  display: flex;
  flex-direction: column;
`;

const TopBars = styled.div`
  flex: none;
  display: flex;
  flex-direction: column;
  gap: 5px;
  height: 80px;
`;

const App = () => (
  <Page>
    <GlobalStyle />
    <ComponentList />
    <Main>
      <TopBars>
        <Row>
          <Band $end={2}>
            <Grip />
            <Tool icon="brush" label="删除" disabled />
            <Sep />
            <Tool icon="copy" label="复制" disabled />
            <Tool icon="mirror" label="镜像" disabled />
            <Sep />
            <Tool icon="move" label="移动" disabled />
            <Tool icon="rotate" label="旋转" disabled />
            <Sep />
            <Tool icon="extend" label="延伸" disabled />
            <Tool icon="trim" label="修剪" disabled />
            <Sep />
            <Tool icon="breaks" label="打断" disabled />
            <Tool icon="join" label="合并" disabled />
            <Tool icon="split" label="分割" disabled />
            <Sep />
            <Tool icon="align" label="对齐" caret tight disabled />
            <Tool icon="offset" label="偏移" disabled />
            <Tool icon="stretch" label="拉伸" disabled />
            <Sep />
            <Tool icon="gripset" label="设置夹点" disabled />
          </Band>
          <Band $gap={5} $end={2}>
            <Grip />
            <Tool icon="twoPoint" label="两点" />
            <Tool icon="parallel" label="平行" />
            <Tool icon="pointAngle" label="点角" caret />
            <Tool icon="threeAxis" label="三点辅轴" caret />
            <Tool icon="delAxis" label="删除辅轴" />
            <Tool icon="dimension" label="尺寸标注" caret />
          </Band>
        </Row>
        <Row>
          <Band $end={1}>
            <Grip />
            <ComboGroup $lead={2}>
              <Combo name="楼层" value="基础层" width={58} />
              <Combo name="构件类型" value="基础" width={70} />
              <Combo name="构件" value="筏板基础" width={70} />
              <Combo name="名称" value="FB-1" width={70} />
            </ComboGroup>
            <Sep />
            <Tool icon="props" label="属性" on />
            <Tool icon="editBar" label="编辑钢筋" on />
            <Tool icon="list" label="构件列表" on />
            <Tool icon="dropper" label="拾取构件" />
          </Band>
          <Band $gap={2}>
            <Grip />
            <Tool icon="cursor" label="选择" on />
            <SplitCaret aria-label="选择方式"><Caret /></SplitCaret>
            <Sep />
            <Tool icon="point" label="点" />
            <Sep />
            <Tool icon="line" label="直线" />
            <Tool icon="arc" label="三点画弧" caret />
            <ComboGroup $lead={1}>
              <Combo name="画弧方式" value="" width={56} />
            </ComboGroup>
            <Tool icon="rect" label="矩形" />
            <Sep />
            <Tool icon="autoSlab" label="自动生成板" />
            <Tool icon="beam" label="按梁分割" />
            <Tool icon="raft" label="设置筏板变截面" />
            <Tool icon="view" label="查看板内钢筋" />
          </Band>
        </Row>
        <Row $height={19}>
          <Band $gap={412} $end={24}><Grip /></Band>
        </Row>
      </TopBars>

      <Viewport>
        <Scene />
        <FloatWindow $left={10} $top={3} $width={166} $height={176}>
          <WindowTitle $pad="0 7px">钢筋显示控制面板</WindowTitle>
          <CheckList>
            {['U形构造封边钢筋', '显示其它图元', '显示详细公式'].map(label => (
              <CheckLabel key={label}><CheckBox defaultChecked /><span><Song>{label}</Song></span></CheckLabel>
            ))}
          </CheckList>
        </FloatWindow>
        <FloatWindow $left={76} $top={69} $width={447} $height={564}>
          <WindowTitle $pad="0 0 0 6px">属性编辑器<CloseButton aria-label="关闭">x</CloseButton></WindowTitle>
          <PropFrame><PropertyEditor /></PropFrame>
        </FloatWindow>
      </Viewport>

      <Dock>
        <Row>
          <Band>
            <Grip />
            <Tool icon="ortho" label="正交" />
            <Tool icon="snap" label="对象捕捉" on />
            <Tool icon="dynInput" label="动态输入" on />
          </Band>
          <Band $gap={3}>
            <Grip />
            <Tool icon="cross" label="交点" />
            <Tool icon="perp" label="垂点" on />
            <Tool icon="mid" label="中点" on />
            <Tool icon="vertex" label="顶点" />
            <Tool icon="coord" label="坐标" />
          </Band>
          <Band $gap={3} $end={2}>
            <Grip />
            <ComboGroup $lead={1}><Combo name="偏移方式" value="不偏移" width={58} /></ComboGroup>
            <Sep />
            <UnitLabel>X=<Spin label="X" value="0" width={58} /></UnitLabel>
            <Unit $width={28}>mm</Unit>
            <UnitLabel>Y=<Spin label="Y" value="0" width={58} /></UnitLabel>
            <Unit $width={25}>mm</Unit>
            <Sep />
            <RotateLabel><CheckBox $pale />旋转</RotateLabel>
            <Spin label="旋转角度" value="0.000" width={68} />
            <Unit $width={8}>°</Unit>
          </Band>
        </Row>
        <DockBody>
          <DockHandle>
            <IconSvg width="11" height="10" viewBox="0 0 11 10"><path d="M1 1h9v8H1z" fill="#fff" stroke="#333" /><path d="M2 2l7 6M9 2L2 8" stroke="#722" strokeWidth="1.500" /></IconSvg>
          </DockHandle>
          <DockMain>
            <DetailTools>
              {['first', 'prev', 'next', 'last'].map(name => (
                <ToolButton key={name} $iconOnly aria-label={name}><Icon name={name} /></ToolButton>
              ))}
              <Sep />
              <ToolButton $iconOnly aria-label="上移"><Icon name="up" /></ToolButton>
              <ToolButton $iconOnly aria-label="下移"><Icon name="down" /></ToolButton>
              <Sep />
              <Tool icon="insert" label="插入" disabled />
              <Tool icon="remove" label="删除" disabled />
              <Tool icon="scale" label="缩尺配筋" />
              <Tool icon="info" label="钢筋信息" />
              <Tool icon="library" label="钢筋图库" />
              <Tool icon="other" label="其他" caret tight />
              <Tool label="关闭" />
              <Sep />
              <Total>单构件钢筋总重(kg)：234.638</Total>
            </DetailTools>
            <BarDetails />
          </DockMain>
        </DockBody>
      </Dock>
    </Main>
    <Markup />
  </Page>
);

export default App;
